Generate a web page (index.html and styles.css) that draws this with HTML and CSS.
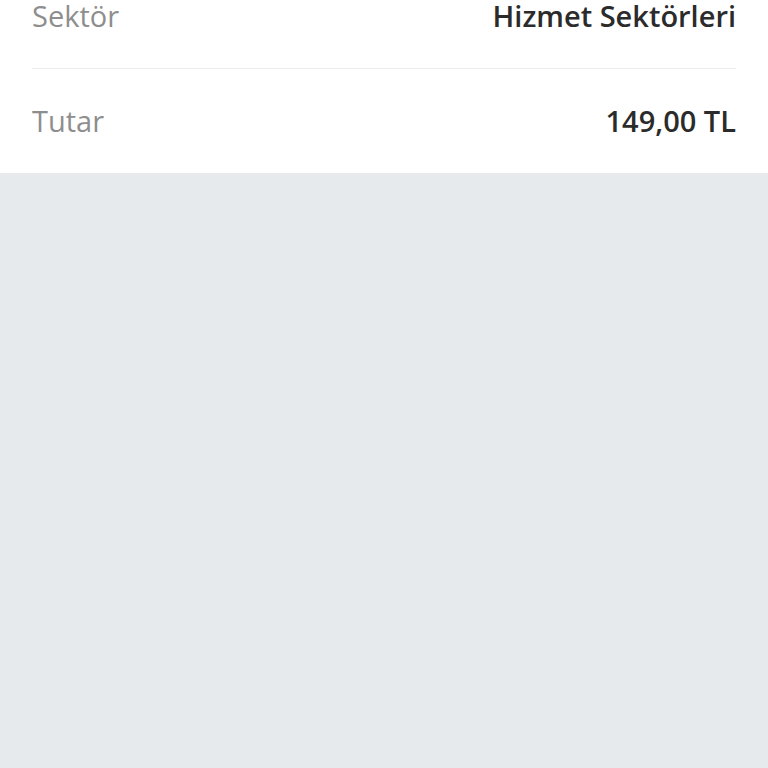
FILE: index.html
```html
<!DOCTYPE html>
<html lang="tr">
<head>
<meta charset="UTF-8">
<meta name="viewport" content="width=device-width, initial-scale=1.0">
<title>Ödeme Detayı</title>
<link rel="stylesheet" href="styles.css">
</head>
<body>
  <div class="details">
    <div class="row first">
      <span class="label">Sektör</span>
      <span class="value">Hizmet Sektörleri</span>
    </div>
    <div class="row">
      <span class="label">Tutar</span>
      <span class="value">149,00 TL</span>
    </div>
  </div>
</body>
</html>
```

FILE: styles.css
```css
body {
  margin: 0;
  height: 768px;
  overflow: hidden; /* kaydırma yok */
  background-color: #e6eaed;
  font-family: "Open Sans", Lato, sans-serif;
}

.details {
  padding: 0 32px;
  background-color: #fff;
}

.row {
  display: flex;
  justify-content: space-between;
  align-items: center;
  height: 104px;
  font-size: 29px;
  line-height: 32px;
}

/* ilk satır üstten kesik görünüyor */
.row.first {
  height: 68px;
  align-items: flex-start;
  padding-top: 0;
  line-height: 32px;
}

.row + .row {
  border-top: 1px solid #ececec;
}

.label {
  color: #8e8e8e;
}

.value {
  color: #2b2b2b;
  font-weight: 600;
}
```
